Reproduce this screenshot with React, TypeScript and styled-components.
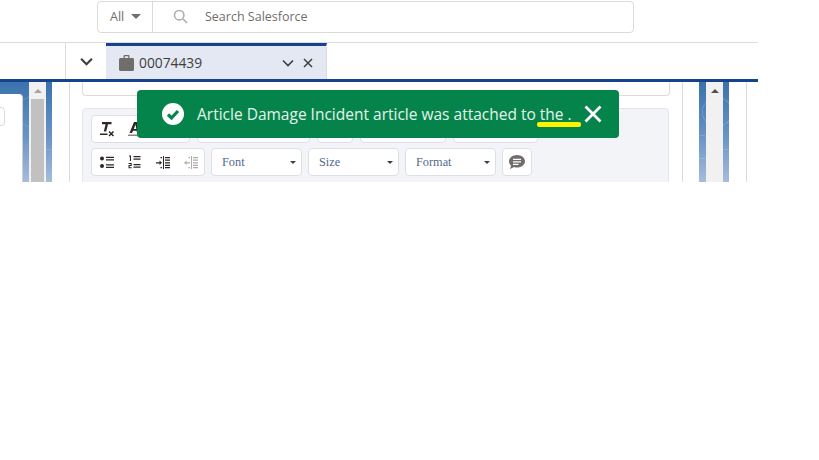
import React from 'react';
import styled, { createGlobalStyle } from 'styled-components';

const Global = createGlobalStyle`
  html, body {
    margin: 0;
    background: #fff;
    font-family: 'Open Sans', 'Liberation Sans', sans-serif;
  }
  svg {
    flex-shrink: 0;
  }
`;

const sky = `
  radial-gradient(circle at 60% 30%, rgba(255,255,255,0) 0 14px, rgba(255,255,255,.14) 14px 15px, rgba(255,255,255,0) 15px),
  radial-gradient(circle at 10% 65%, rgba(255,255,255,0) 0 11px, rgba(255,255,255,.14) 11px 12px, rgba(255,255,255,0) 12px),
  radial-gradient(circle at 90% 85%, rgba(255,255,255,0) 0 17px, rgba(255,255,255,.14) 17px 18px, rgba(255,255,255,0) 18px),
  linear-gradient(180deg, #3a72ae 0%, #6a94c6 55%, #a6bcdc 100%)
`;

const Page = styled.div`
  position: relative;
  width: 758px;
  height: 182px;
  overflow: hidden;
  background: #fff;
`;

const Header = styled.header`
  height: 43px;
  box-sizing: border-box;
  padding: 1px 0 0 97px;
  border-bottom: 1px solid #dddbda;
`;

const SearchBox = styled.div`
  display: flex;
  width: 537px;
  height: 32px;
  box-sizing: border-box;
  border: 1px solid #dddbda;
  border-radius: 4px;
  color: #706e6b;
  font-size: 12.5px;
`;

const ScopeSelect = styled.div`
  display: flex;
  align-items: center;
  gap: 7px;
  width: 55px;
  box-sizing: border-box;
  padding: 0 0 1px 12px;
  border-right: 1px solid #dddbda;
`;

const Caret = styled.span<{ $size?: number; $color?: string }>`
  width: 0;
  height: 0;
  border-left: ${(p) => p.$size ?? 4}px solid transparent;
  border-right: ${(p) => p.$size ?? 4}px solid transparent;
  border-top: ${(p) => p.$size ?? 4}px solid ${(p) => p.$color ?? '#706e6b'};
`;

const SearchField = styled.div`
  display: flex;
  align-items: center;
  gap: 17px;
  padding: 0 0 1px 20px;
`;

const TabBar = styled.nav`
  display: flex;
  height: 39px;
  box-sizing: border-box;
  border-bottom: 3px solid #16448c;
`;

const OverflowButton = styled.div`
  display: flex;
  align-items: center;
  justify-content: center;
  width: 41px;
  margin-left: 65px;
  box-sizing: border-box;
  border-left: 1px solid #dddbda;
  color: #3e3e3c;
`;

const Tab = styled.div`
  display: flex;
  align-items: center;
  width: 221px;
  box-sizing: border-box;
  padding: 0 13px 0 13px;
  background: #e4e8f2;
  border-top: 3px solid #16448c;
  border-right: 1px solid #dddbda;
  color: #3e3e3c;
  font-size: 13.8px;
`;

const TabLabel = styled.span`
  flex: 1;
  margin-left: 5px;
`;

const TabActions = styled.span`
  display: flex;
  align-items: center;
  gap: 9px;
`;

const Workspace = styled.main`
  display: flex;
  height: 100px;
`;

const LeftRail = styled.div`
  position: relative;
  width: 52px;
  background: ${sky};
`;

const LeftCard = styled.div`
  position: absolute;
  top: 12px;
  left: 0;
  width: 23px;
  height: 100%;
  box-sizing: border-box;
  background: #fff;
  border-right: 1px solid #cfcfcf;
  border-top-right-radius: 4px;
`;

const LeftCardButton = styled.span`
  position: absolute;
  top: 13px;
  left: -6px;
  width: 11px;
  height: 19px;
  box-sizing: border-box;
  border: 1px solid #dddbda;
  border-radius: 4px;
`;

const Scrollbar = styled.div`
  position: absolute;
  top: 0;
  bottom: 0;
  display: flex;
  justify-content: center;
  width: 17px;
  padding-top: 7px;
  box-sizing: border-box;
  background: #f1f1f1;
`;

const LeftScrollbar = styled(Scrollbar)`
  left: 29px;
`;

const LeftThumb = styled.span`
  position: absolute;
  top: 17px;
  bottom: 0;
  left: 2px;
  width: 13px;
  background: #c1c1c1;
`;

const RightScrollbar = styled(Scrollbar)`
  left: 7px;
`;

const ArrowUp = styled.span<{ $color: string }>`
  width: 0;
  height: 0;
  border-left: 4px solid transparent;
  border-right: 4px solid transparent;
  border-bottom: 4px solid ${(p) => p.$color};
`;

const CenterColumn = styled.div`
  width: 614px;
  margin-left: 17px;
  box-sizing: border-box;
  padding: 0 12px;
  border-left: 1px solid #dddbda;
  border-right: 1px solid #dddbda;
`;

const SubjectField = styled.div`
  width: 588px;
  height: 14px;
  box-sizing: border-box;
  border: 1px solid #dddbda;
  border-top: none;
  border-radius: 0 0 4px 4px;
`;

const Editor = styled.section`
  display: flex;
  flex-direction: column;
  gap: 5px;
  width: 587px;
  height: 100px;
  margin-top: 12px;
  box-sizing: border-box;
  padding: 6px 8px;
  background: #f3f4f8;
  border: 1px solid #e4e6ee;
  border-radius: 4px 4px 0 0;
`;

const ToolRow = styled.div<{ $gap: number }>`
  display: flex;
  gap: ${(p) => p.$gap}px;
`;

const ToolGroup = styled.div<{ $width: number }>`
  display: flex;
  align-items: center;
  gap: 14px;
  width: ${(p) => p.$width}px;
  height: 28px;
  box-sizing: border-box;
  padding: 0 8px;
  background: #fff;
  border: 1px solid #dddfe8;
  border-radius: 4px;
`;

const FontSelect = styled(ToolGroup)`
  justify-content: space-between;
  padding: 0 5px 0 10px;
  color: #54698d;
  font-family: 'Liberation Serif', serif;
  font-size: 12.3px;
`;

const IconButton = styled(ToolGroup)`
  justify-content: center;
  padding: 0;
`;

const RightRail = styled.div`
  position: relative;
  width: 30px;
  margin-left: 16px;
  background: ${sky};
`;

const EndColumn = styled.div`
  width: 18px;
  box-sizing: border-box;
  border-right: 1px solid #dddbda;
`;

const Toast = styled.div`
  position: absolute;
  top: 90px;
  left: 137px;
  display: flex;
  align-items: center;
  width: 482px;
  height: 48px;
  box-sizing: border-box;
  padding-left: 25px;
  background: #04844b;
  border-radius: 4px;
  color: #fff;
`;

const ToastMessage = styled.span`
  margin-left: 13px;
  font-size: 15.5px;
  white-space: nowrap;
  color: #e6f3ec;
`;

const ToastLink = styled.span`
  text-decoration: underline;
  text-decoration-thickness: 1px;
  text-underline-offset: 2px;
`;

const ToastClose = styled.svg`
  margin-left: 12px;
`;

const Highlight = styled.span`
  position: absolute;
  top: 122px;
  left: 537px;
  width: 44px;
  height: 5px;
  border-radius: 2px;
  background: #fff200;
`;

const Chevron = ({ size = 12, width = 2 }: { size?: number; width?: number }) => (
  <svg width={size} height={size} viewBox="0 0 12 12" fill="none" stroke="currentColor" strokeWidth={width}>
    <path d="M1 3.5 6 8.5 11 3.5" />
  </svg>
);

const Cross = ({ size = 10, width = 1.5 }: { size?: number; width?: number }) => (
  <svg width={size} height={size} viewBox="0 0 10 10" fill="none" stroke="currentColor" strokeWidth={width}>
    <path d="M1 1 9 9M9 1 1 9" />
  </svg>
);

const SearchIcon = () => (
  <svg width="15" height="15" viewBox="0 0 15 15" fill="none" stroke="#b0adab" strokeWidth="1.6">
    <circle cx="6.2" cy="6.2" r="4.7" />
    <path d="M9.8 9.8 14 14" />
  </svg>
);

const CaseIcon = () => (
  <svg width="15" height="16" viewBox="0 0 15 16" fill="#706e6b">
    <path d="M4.5 3V1.200C4.500.5 5 0 5.700 0h3.600c.7 0 1.200.5 1.200 1.200V3H9.200V1.300H5.800V3z" />
    <path d="M1.500 3h12c.8 0 1.500.7 1.500 1.500v10c0 .8-.7 1.500-1.500 1.500h-12C.7 16 0 15.300 0 14.500v-10C0 3.700.7 3 1.500 3z" />
  </svg>
);

const ClearFormatIcon = () => (
  <svg width="14" height="15" viewBox="0 0 14 15">
    <path d="M2 0h9.500v2.200H8L6.200 9.500H3.800L5.600 2.200H2z" fill="#2b2826" />
    <path d="M0 11.500h7.500V13H0z" fill="#2b2826" />
    <path d="M9 9.500l4.500 4.500M13.500 9.500 9 14" stroke="#2b2826" strokeWidth="1.500" />
  </svg>
);

const TextColorIcon = () => (
  <svg width="14" height="15" viewBox="0 0 14 15">
    <path d="M6 0h3l2.500 11H9l-.4-2.200H5.100L4 11H1.500zM5.800 7h2.500L7.600 2.500z" fill="#2b2826" fillRule="evenodd" />
    <path d="M0 12.500h14V14H0z" fill="#8a8886" />
  </svg>
);

const BulletListIcon = () => (
  <svg width="14" height="13" viewBox="0 0 14 13" fill="#2b2826">
    <circle cx="2" cy="2.500" r="2" />
    <circle cx="2" cy="10" r="2" />
    <path d="M6 .8h8v1.300H6zM6 3.300h8v1.300H6zM6 8.300h8v1.300H6zM6 10.800h8v1.300H6z" />
  </svg>
);

const NumberListIcon = () => (
  <svg width="14" height="14" viewBox="0 0 14 14" fill="#2b2826">
    <path d="M1 .5h2v5.500H1.900V1.600H1zM.5 8h3.200v3H1.600v1.300h2.100v1H.5v-3.200h2.100V9H.5z" />
    <path d="M5.500 1h7v1.300h-7zM5.500 3.500h7v1.300h-7zM5.500 9h7v1.300h-7zM5.500 11.500h7v1.300h-7z" />
  </svg>
);

const IndentIcon = ({ color, outdent }: { color: string; outdent?: boolean }) => (
  <svg width="14" height="13" viewBox="0 0 14 13" fill={color}>
    <path d="M7 0h1v13H7zM9 1h5v1.200H9zM9 3.600h5v1.200H9zM9 6.200h5v1.200H9zM9 8.800h5v1.200H9zM9 11h5v1.200H9z" />
    <path d={outdent ? 'M6 6.200H2.500V4.500L0 6.800l2.500 2.300V7.400H6z' : 'M0 6.200h3.500V4.500L6 6.800 3.500 9.100V7.400H0z'} />
    <path d="M4.500 1h1.500v1.200H4.500zM4.500 11h1.500v1.200H4.500z" />
  </svg>
);

const CommentIcon = () => (
  <svg width="16" height="14" viewBox="0 0 16 14">
    <path d="M8 0c4.400 0 8 2.800 8 6.300s-3.600 6.300-8 6.300c-1 0-2-.1-2.900-.5L1 14l1.100-3.200C.8 9.700 0 8.100 0 6.300 0 2.800 3.600 0 8 0z" fill="#706e6b" />
    <path d="M4 3.800h8v1.300H4zM4 6.300h8v1.300H4zM4 8.800h5.500v1.300H4z" fill="#fff" />
  </svg>
);

const App: React.FC = () => (
  <>
    <Global />
    <Page>
      <Header>
        <SearchBox>
          <ScopeSelect>
            All
            <Caret $size={5} />
          </ScopeSelect>
          <SearchField>
            <SearchIcon />
            Search Salesforce
          </SearchField>
        </SearchBox>
      </Header>

      <TabBar>
        <OverflowButton>
          <Chevron size={13} />
        </OverflowButton>
        <Tab>
          <CaseIcon />
          <TabLabel>00074439</TabLabel>
          <TabActions>
            <Chevron size={12} width={1.6} />
            <Cross />
          </TabActions>
        </Tab>
      </TabBar>

      <Workspace>
        <LeftRail>
          <LeftCard>
            <LeftCardButton />
          </LeftCard>
          <LeftScrollbar>
            <ArrowUp $color="#a3a3a3" />
            <LeftThumb />
          </LeftScrollbar>
        </LeftRail>
        <CenterColumn>
          <SubjectField />
          <Editor>
            <ToolRow $gap={7}>
              <ToolGroup $width={99}>
                <ClearFormatIcon />
                <TextColorIcon />
              </ToolGroup>
              <ToolGroup $width={113} />
              <ToolGroup $width={36} />
              <ToolGroup $width={86} />
              <ToolGroup $width={85} />
            </ToolRow>
            <ToolRow $gap={6}>
              <ToolGroup $width={114}>
                <BulletListIcon />
                <NumberListIcon />
                <IndentIcon color="#2b2826" />
                <IndentIcon color="#b0adab" outdent />
              </ToolGroup>
              <FontSelect $width={91}>
                Font
                <Caret $size={3} $color="#3e3e3c" />
              </FontSelect>
              <FontSelect $width={91}>
                Size
                <Caret $size={3} $color="#3e3e3c" />
              </FontSelect>
              <FontSelect $width={91}>
                Format
                <Caret $size={3} $color="#3e3e3c" />
              </FontSelect>
              <IconButton $width={30}>
                <CommentIcon />
              </IconButton>
            </ToolRow>
          </Editor>
        </CenterColumn>
        <RightRail>
          <RightScrollbar>
            <ArrowUp $color="#505050" />
          </RightScrollbar>
        </RightRail>
        <EndColumn />
      </Workspace>

      <Toast>
        <svg width="22" height="22" viewBox="0 0 22 22">
          <circle cx="11" cy="11" r="11" fill="#fff" />
          <path d="M6 11.500 9.500 15 16 8" fill="none" stroke="#04844b" strokeWidth="3.200" />
        </svg>
        <ToastMessage>
          Article Damage Incident article was attached to <ToastLink>the </ToastLink>.
        </ToastMessage>
        <ToastClose width="18" height="18" viewBox="0 0 18 18" fill="none" stroke="#fff" strokeWidth="2.800">
          <path d="M1.500 1.500 16.500 16.500M16.500 1.500 1.500 16.500" />
        </ToastClose>
      </Toast>
      <Highlight />
    </Page>
  </>
);

export default App;
